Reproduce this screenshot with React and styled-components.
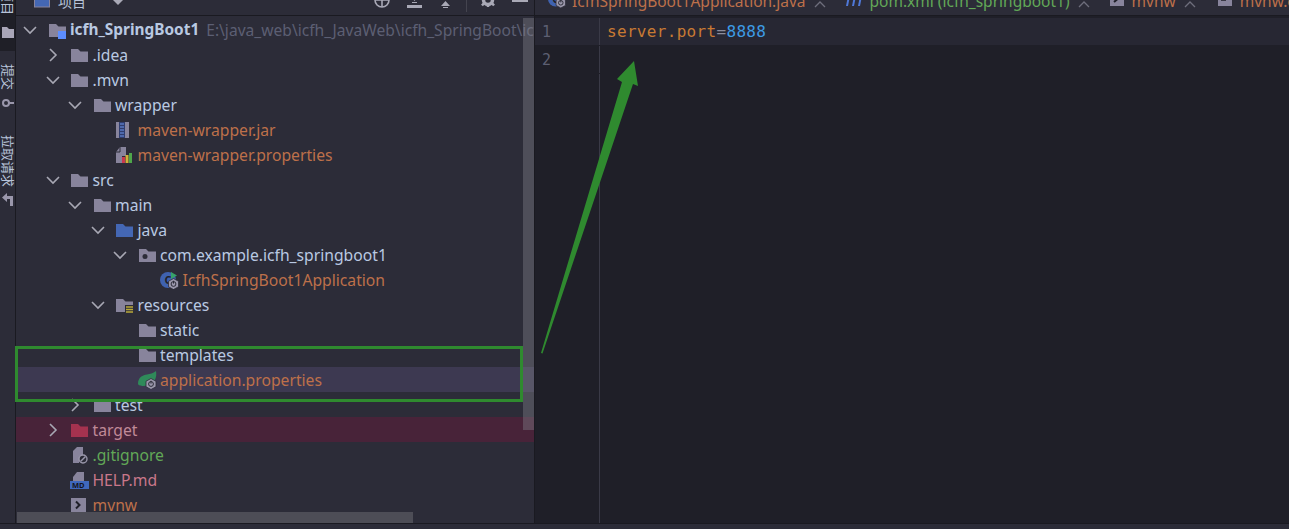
import styled, { createGlobalStyle } from "styled-components";

const GlobalStyle = createGlobalStyle`
  html, body {
    margin: 0;
    padding: 0;
    background: #2c2c38;
  }
`;

const UI_FONT = `"Noto Sans", "Noto Sans CJK SC", sans-serif`;

const Page = styled.div`
  position: relative;
  width: 1289px;
  height: 529px;
  overflow: hidden;
  display: flex;
  flex-direction: column;
  background: #2c2c38;
  font-family: ${UI_FONT};
`;

const Main = styled.div`
  flex: 1;
  min-height: 0;
  display: flex;
  border-bottom: 1px solid #1a1a21;
`;

const BottomStrip = styled.div`
  height: 5px;
  background: #2c2c38;
`;

const Rail = styled.div`
  width: 15px;
  flex-shrink: 0;
  display: flex;
  flex-direction: column;
  align-items: center;
  background: #2c2c38;
  border-right: 1px solid #1a1a21;
  overflow: hidden;
`;

const RailActive = styled.div`
  height: 51px;
  width: 100%;
  flex-shrink: 0;
  background: #1f1f27;
  display: flex;
  flex-direction: column;
  align-items: center;
  justify-content: flex-end;
  padding-bottom: 13px;
  box-sizing: border-box;
  gap: 12px;
`;

const RailLabel = styled.div`
  writing-mode: vertical-rl;
  text-orientation: sideways;
  flex-shrink: 0;
  font-size: 13px;
  line-height: 15px;
  color: #b7c3d8;
  white-space: nowrap;
  margin-top: ${(props) => props.$top || 0}px;
`;

const RailIcon = styled.svg`
  flex-shrink: 0;
  margin-top: ${(props) => props.$top || 0}px;
`;

const ToolWindow = styled.div`
  width: 518px;
  flex-shrink: 0;
  display: flex;
  flex-direction: column;
  border-right: 1px solid #1a1a21;
  position: relative;
`;

const ToolHeader = styled.div`
  height: 16px;
  flex-shrink: 0;
  box-sizing: border-box;
  display: flex;
  align-items: flex-end;
  padding-left: 18px;
  padding-bottom: 7px;
  border-bottom: 1px solid #1a1a21;
  overflow: hidden;
`;

const HeaderTitle = styled.span`
  font-size: 14px;
  line-height: 14px;
  color: #b7c3d8;
  margin-left: 8px;
  margin-bottom: -1px;
  white-space: nowrap;
`;

const HeaderIcon = styled.svg`
  flex-shrink: 0;
  margin-left: ${(props) => props.$left}px;
  margin-bottom: ${(props) => props.$raise || 0}px;
  fill: none;
  stroke: #a9a9b6;
`;

const HeaderSeparator = styled.div`
  width: 1px;
  height: 12px;
  flex-shrink: 0;
  background: #44444f;
  margin-left: ${(props) => props.$left}px;
  margin-bottom: -4px;
`;

const Tree = styled.div`
  flex: 1;
  min-height: 0;
  padding-top: 1px;
  overflow: hidden;
`;

const Row = styled.div`
  height: 25px;
  display: flex;
  align-items: center;
  white-space: nowrap;
  overflow: hidden;
  padding-left: ${(props) => 6 + props.$depth * 22.5}px;
  background: ${(props) =>
    props.$selected ? "#3d3951" : props.$ignored ? "#482339" : "transparent"};
`;

const Chevron = styled.svg`
  width: 16px;
  height: 16px;
  flex-shrink: 0;
  margin-right: 9.5px;
  fill: none;
  stroke: #a8a8b4;
  stroke-width: 1.6;
  visibility: ${(props) => (props.$hidden ? "hidden" : "visible")};
`;

const IconBox = styled.svg`
  width: 19px;
  height: 18px;
  flex-shrink: 0;
  margin-right: 3.5px;
`;

const Name = styled.span`
  font-size: ${(props) => (props.$bold ? 15.4 : 15.7)}px;
  line-height: 20px;
  color: ${(props) => props.$color || "#b9c9e2"};
  font-weight: ${(props) => (props.$bold ? 700 : 400)};
`;

const PathText = styled.span`
  font-size: 15.6px;
  line-height: 20px;
  color: #5c5f73;
  margin-left: 7px;
`;

const VerticalThumb = styled.div`
  position: absolute;
  left: 507px;
  top: 18px;
  width: 11px;
  height: 412px;
  background: rgba(130, 130, 140, 0.4);
`;

const HorizontalThumb = styled.div`
  position: absolute;
  left: 1px;
  bottom: 0;
  width: 396px;
  height: 11px;
  background: #4d4d56;
`;

const Editor = styled.div`
  flex: 1;
  min-width: 0;
  display: flex;
  flex-direction: column;
  background: #1f1f28;
`;

const TabBar = styled.div`
  height: 16px;
  flex-shrink: 0;
  box-sizing: border-box;
  display: flex;
  align-items: flex-start;
  padding-left: 13px;
  background: #2c2c38;
  border-bottom: 1px solid #1a1a21;
  overflow: hidden;
`;

const Tab = styled.div`
  height: 20px;
  margin-top: -9px;
  flex-shrink: 0;
  display: flex;
  align-items: center;
  margin-right: ${(props) => props.$gap}px;
`;

const TabLabel = styled.span`
  font-size: 15.5px;
  line-height: 20px;
  white-space: nowrap;
  color: ${(props) => props.$color};
  margin-left: ${(props) => props.$left}px;
`;

const TabClose = styled.svg`
  width: 12px;
  height: 8px;
  margin-left: 8px;
  margin-top: 6px;
  fill: none;
  stroke: #6e6e7c;
  stroke-width: 1.3;
`;

const TabIcon = styled.svg`
  width: 18px;
  height: 18px;
  flex-shrink: 0;
  margin-bottom: 4px;
`;

const Code = styled.div`
  flex: 1;
  min-height: 0;
  display: flex;
  flex-direction: column;
  padding-top: 2px;
`;

const CodeLine = styled.div`
  height: 27px;
  margin-bottom: 1px;
  display: flex;
  align-items: center;
  background: ${(props) => (props.$current ? "#272733" : "transparent")};
`;

const LineNumber = styled.div`
  width: 64px;
  flex-shrink: 0;
  box-sizing: border-box;
  padding-left: 7px;
  font-family: "DejaVu Sans Mono", monospace;
  font-size: 15px;
  color: #5d5f72;
`;

const Source = styled.div`
  flex: 1;
  align-self: stretch;
  display: flex;
  align-items: center;
  padding-left: 7px;
  border-left: 1px solid #3a3a47;
  font-family: "DejaVu Sans Mono", monospace;
  font-size: 16px;
  letter-spacing: 0.32px;
`;

const GutterRest = styled.div`
  flex: 1;
  margin-left: 64px;
  border-left: 1px solid #3a3a47;
`;

const Token = styled.span`
  color: ${(props) => props.$color};
`;

const Annotation = styled.div`
  position: absolute;
  left: 15px;
  top: 346px;
  width: 508px;
  height: 56px;
  box-sizing: border-box;
  border: 3px solid #2f8a2f;
  pointer-events: none;
`;

const ArrowLayer = styled.svg`
  position: absolute;
  left: 0;
  top: 0;
  pointer-events: none;
`;

const FOLDER = "M1 3h7l2.5 2.5H18V16H1z";

const Folder = ({ color = "#88849c" }) => <path d={FOLDER} fill={color} />;

const PowerBadge = ({ x, y }) => (
  <g>
    <polygon
      points={`${x},${y - 5.5} ${x + 5},${y - 2.75} ${x + 5},${y + 2.75} ${x},${y + 5.5} ${x - 5},${y + 2.75} ${x - 5},${y - 2.75}`}
      fill="#9a97ab"
      stroke="#2c2c38"
      strokeWidth="0.8"
    />
    <circle cx={x} cy={y} r="2.4" fill="none" stroke="#2c2c38" strokeWidth="1" />
    <path d={`M${x} ${y - 3.2}v2.8`} stroke="#2c2c38" strokeWidth="1" />
  </g>
);

const ICONS = {
  folder: <Folder />,
  blue: <Folder color="#4467b4" />,
  ignored: <Folder color="#a5324f" />,
  module: (
    <>
      <Folder />
      <rect x="10" y="10" width="8" height="8" fill="#5c8dff" />
    </>
  ),
  resources: (
    <>
      <Folder />
      <rect x="10" y="9" width="9" height="9" fill="#2c2c38" />
      <path d="M11 11h7M11 13.5h7M11 16h7" stroke="#b9a93a" strokeWidth="1.5" />
    </>
  ),
  package: (
    <>
      <Folder />
      <circle cx="7" cy="10.5" r="2.5" fill="#2c2c38" />
    </>
  ),
  jar: (
    <>
      <rect x="1" y="1" width="13" height="16" fill="#88849c" />
      <rect x="4" y="1" width="6" height="16" fill="#2f3d6e" />
      <path d="M5 3h4M5 6h4M5 9h4M5 12h4M5 15h4" stroke="#6f95ea" strokeWidth="1.2" />
    </>
  ),
  props: (
    <>
      <path d="M1 6l4-5h6v9H7v7H1z" fill="#88849c" />
      <path d="M5 1v5H1" fill="none" stroke="#2c2c38" strokeWidth="1" />
      <rect x="7" y="11" width="3" height="6" fill="#c9384f" />
      <rect x="10.5" y="9" width="3" height="8" fill="#d2b03a" />
      <rect x="14" y="7" width="3" height="10" fill="#4ea64a" />
    </>
  ),
  spring: (
    <>
      <circle cx="8" cy="9" r="8" fill="#3f62b0" />
      <text x="4.5" y="13" fontSize="11" fontWeight="700" fill="#1f1f28" fontFamily="Noto Sans, sans-serif">
        C
      </text>
      <polygon points="11,1 17,4.5 11,8" fill="#36a269" />
      <PowerBadge x={13.5} y={13} />
    </>
  ),
  leaf: (
    <>
      <path d="M0 13C0 6 5 4 9 3.5 12 3 15 2.500 18 0c1 6-1 10-4 12-3 2-5 3-9 3-2 0-5-1-5-2z" fill="#2f8a5a" />
      <PowerBadge x={13} y={13} />
    </>
  ),
  gitignore: (
    <>
      <path d="M3 5l4-4h6v10H9v6H3z" fill="#88849c" />
      <circle cx="13" cy="13" r="4" fill="#2c2c38" stroke="#9a97ab" strokeWidth="1.4" />
      <path d="M10.5 15.5l5-5" stroke="#9a97ab" strokeWidth="1.4" />
    </>
  ),
  md: (
    <>
      <path d="M3 6l4-5h7v9H3z" fill="#88849c" />
      <rect x="0" y="10" width="19" height="8" fill="#3f68bd" />
      <text x="2" y="17" fontSize="7.5" fontWeight="700" fill="#14141c" fontFamily="Noto Sans, sans-serif">
        MD
      </text>
    </>
  ),
  shell: (
    <>
      <rect x="1" y="2" width="15" height="14" fill="#88849c" />
      <path d="M6 5.5l3.5 3.5L6 12.5" fill="none" stroke="#1f1f28" strokeWidth="2" />
    </>
  ),
};

const ORANGE = "#bd704a";

const ROWS = [
  { depth: 0, open: true, icon: "module", name: "icfh_SpringBoot1", bold: true, path: "E:\\java_web\\icfh_JavaWeb\\icfh_SpringBoot\\icfh_SpringBoot1" },
  { depth: 1, open: false, icon: "folder", name: ".idea" },
  { depth: 1, open: true, icon: "folder", name: ".mvn" },
  { depth: 2, open: true, icon: "folder", name: "wrapper" },
  { depth: 3, icon: "jar", name: "maven-wrapper.jar", color: ORANGE },
  { depth: 3, icon: "props", name: "maven-wrapper.properties", color: ORANGE },
  { depth: 1, open: true, icon: "folder", name: "src" },
  { depth: 2, open: true, icon: "folder", name: "main" },
  { depth: 3, open: true, icon: "blue", name: "java" },
  { depth: 4, open: true, icon: "package", name: "com.example.icfh_springboot1" },
  { depth: 5, icon: "spring", name: "IcfhSpringBoot1Application", color: ORANGE },
  { depth: 3, open: true, icon: "resources", name: "resources" },
  { depth: 4, icon: "folder", name: "static" },
  { depth: 4, icon: "folder", name: "templates" },
  { depth: 4, icon: "leaf", name: "application.properties", color: ORANGE, selected: true },
  { depth: 2, open: false, icon: "folder", name: "test" },
  { depth: 1, open: false, icon: "ignored", name: "target", color: "#c08a98", ignored: true },
  { depth: 1, icon: "gitignore", name: ".gitignore", color: "#62a857" },
  { depth: 1, icon: "md", name: "HELP.md", color: "#c9778a" },
  { depth: 1, icon: "shell", name: "mvnw", color: ORANGE },
  { depth: 1, icon: "shell", name: "mvnw.cmd", color: ORANGE },
];

const TreeRow = ({ row }) => (
  <Row $depth={row.depth} $selected={row.selected} $ignored={row.ignored}>
    <Chevron viewBox="0 0 16 16" $hidden={row.open === undefined}>
      <path d={row.open ? "M2 5l6 6 6-6" : "M5 2l6 6-6 6"} />
    </Chevron>
    <IconBox viewBox="0 0 19 18">{ICONS[row.icon]}</IconBox>
    <Name $color={row.color} $bold={row.bold}>
      {row.name}
    </Name>
    {row.path && <PathText>{row.path}</PathText>}
  </Row>
);

const Close = () => (
  <TabClose viewBox="0 0 12 8">
    <path d="M1 7l5-5 5 5" />
  </TabClose>
);

const App = () => {
  return (
    <>
      <GlobalStyle />
      <Page>
        <Main>
          <Rail>
            <RailActive>
              <RailLabel>项目</RailLabel>
              <RailIcon width="12" height="11" viewBox="0 0 12 11">
                <path d="M0 0h5l2 2h5v9H0z" fill="#a9a6b8" />
              </RailIcon>
            </RailActive>
            <RailLabel $top={13}>提交</RailLabel>
            <RailIcon width="12" height="10" viewBox="0 0 12 10" $top={8}>
              <circle cx="4" cy="5" r="3" fill="none" stroke="#9a97ab" strokeWidth="2" />
              <path d="M7 5h5" stroke="#9a97ab" strokeWidth="2" />
            </RailIcon>
            <RailLabel $top={27}>拉取请求</RailLabel>
            <RailIcon width="12" height="13" viewBox="0 0 12 13" $top={6}>
              <path d="M5 0v3h6v10H8V6H5v3L0 4.5z" fill="#9a97ab" />
            </RailIcon>
          </Rail>

          <ToolWindow>
            <ToolHeader>
              <svg width="16" height="11" viewBox="0 2 16 11">
                <rect x="0.5" y="-3" width="15" height="15" fill="#4467b4" stroke="#88849c" />
              </svg>
              <HeaderTitle>项目</HeaderTitle>
              <HeaderIcon width="12" height="5" viewBox="0 0 12 5" $left={26} $raise={3} style={{ stroke: "none" }}>
                <path d="M1 0h10L6 5z" fill="#a9a9b6" />
              </HeaderIcon>
              <HeaderIcon width="16" height="8" viewBox="0 8 16 8" $left={250} strokeWidth="1.6">
                <circle cx="8" cy="8" r="7" />
                <path d="M8 1v14M1 8h14" />
              </HeaderIcon>
              <HeaderIcon width="15" height="9" viewBox="0 2 15 9" $left={17} style={{ stroke: "none" }}>
                <path d="M4 0h7L7.5 4zM5 5h5v1H5zM0 8h15v3H0z" fill="#a9a9b6" />
              </HeaderIcon>
              <HeaderIcon width="15" height="9" viewBox="0 0 15 9" $left={16} style={{ stroke: "none" }}>
                <path d="M0 0h15v1H0zM7.5 2l4.5 5H3zM5 8h5v1H5z" fill="#a9a9b6" />
              </HeaderIcon>
              <HeaderSeparator $left={13} />
              <HeaderIcon width="16" height="7" viewBox="0 8 16 7" $left={13} $raise={1} strokeWidth="3.5">
                <circle cx="8" cy="8" r="4.5" />
                <path d="M8 11v4M4.500 10.500L2 13.500M11.500 10.500l2.500 3" strokeWidth="2.500" />
              </HeaderIcon>
              <HeaderIcon width="16" height="2" viewBox="0 0 16 2" $left={16} $raise={6} style={{ stroke: "none" }}>
                <rect width="16" height="2" fill="#a9a9b6" />
              </HeaderIcon>
            </ToolHeader>
            <Tree>
              {ROWS.map((row) => (
                <TreeRow key={row.name} row={row} />
              ))}
            </Tree>
            <VerticalThumb />
            <HorizontalThumb />
          </ToolWindow>

          <Editor>
            <TabBar>
              <Tab $gap={19}>
                <TabIcon viewBox="0 0 19 18">{ICONS.spring}</TabIcon>
                <TabLabel $color={ORANGE} $left={6}>IcfhSpringBoot1Application.java</TabLabel>
                <Close />
              </Tab>
              <Tab $gap={18}>
                <TabIcon viewBox="0 0 18 18">
                  <path d="M1 16l2-10h2l-2 10zM7 16l2-10h2L9 16zM13 16l2-10h2l-2 10z" fill="#4f78d8" />
                </TabIcon>
                <TabLabel $color="#62a857" $left={7}>pom.xml (icfh_springboot1)</TabLabel>
                <Close />
              </Tab>
              <Tab $gap={20}>
                <TabIcon viewBox="0 0 18 18">
                  <rect x="2" y="2" width="14" height="14" fill="#88849c" />
                  <path d="M6 12l6-5" stroke="#1f1f28" strokeWidth="2" />
                </TabIcon>
                <TabLabel $color={ORANGE} $left={6}>mvnw</TabLabel>
                <Close />
              </Tab>
              <Tab $gap={0}>
                <TabIcon viewBox="0 0 18 18">
                  <rect x="2" y="2" width="14" height="14" fill="#88849c" />
                  <path d="M5 7h8M5 10h5" stroke="#1f1f28" strokeWidth="1.6" />
                </TabIcon>
                <TabLabel $color={ORANGE} $left={6}>mvnw.cmd</TabLabel>
              </Tab>
            </TabBar>
            <Code>
              <CodeLine $current>
                <LineNumber>1</LineNumber>
                <Source>
                  <Token $color="#c87a33">server.port</Token>
                  <Token $color="#8d8d9c">=</Token>
                  <Token $color="#3d9be3">8888</Token>
                </Source>
              </CodeLine>
              <CodeLine>
                <LineNumber>2</LineNumber>
                <Source />
              </CodeLine>
              <GutterRest />
            </Code>
          </Editor>
        </Main>
        <BottomStrip />

        <Annotation />
        <ArrowLayer width="1289" height="529" viewBox="0 0 1289 529">
          <polygon
            points="541,353 622,82 617,79 634,61 638,86 633,84 542.5,353.5"
            fill="#2f8a2f"
          />
        </ArrowLayer>
      </Page>
    </>
  );
};

export default App;
